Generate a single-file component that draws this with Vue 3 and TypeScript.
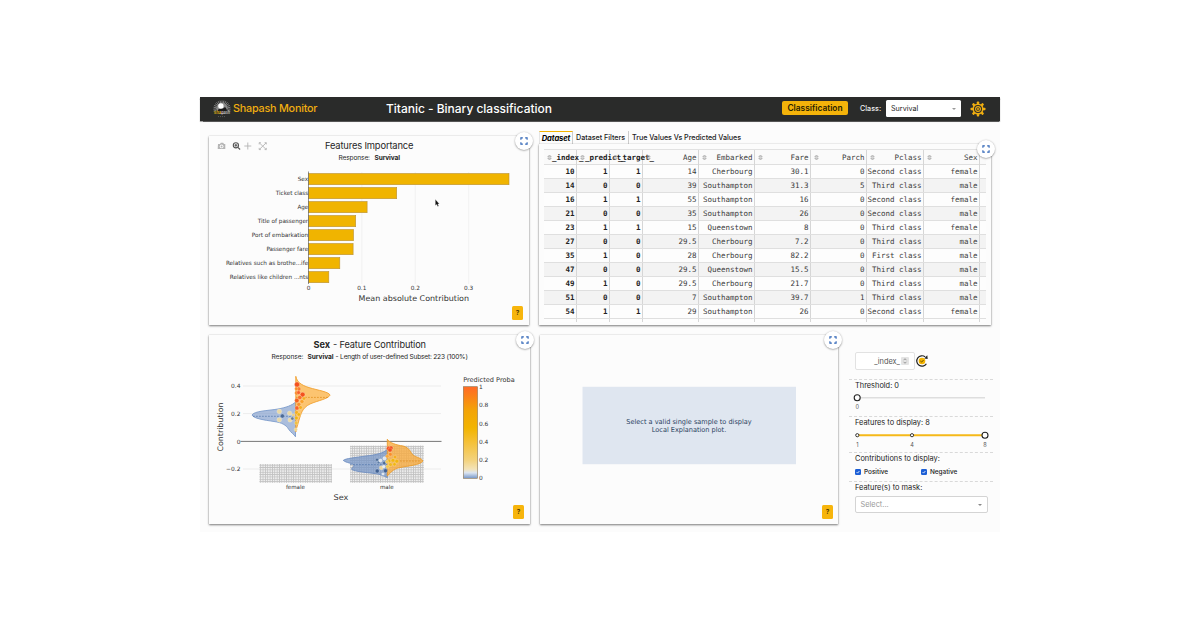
<script setup lang="ts">
interface Bar { label: string; w: number; lw: number }
const bars: Bar[] = [
  { label: 'Sex', w: 200.4, lw: 10.5 },
  { label: 'Ticket class', w: 88.1, lw: 32.5 },
  { label: 'Age', w: 58.5, lw: 10.8 },
  { label: 'Title of passenger', w: 47.1, lw: 50.5 },
  { label: 'Port of embarkation', w: 44.9, lw: 56.5 },
  { label: 'Passenger fare', w: 44.5, lw: 41.8 },
  { label: 'Relatives such as brothe...ife', w: 31.2, lw: 82.3 },
  { label: 'Relatives like children ...nts', w: 20.2, lw: 78.4 },
]
const xTicks = [
  { x: 308.5, t: '0' },
  { x: 361.8, t: '0.1' },
  { x: 415.3, t: '0.2' },
  { x: 468.7, t: '0.3' },
]
const yTicks = [
  { y: 386, t: '0.4' },
  { y: 413.6, t: '0.2' },
  { y: 441.4, t: '0' },
  { y: 469, t: '−0.2' },
]
const scaleTicks = ['1', '0.8', '0.6', '0.4', '0.2', '0']
const columns = ['_index_', '_predict_', '_target_', 'Age', 'Embarked', 'Fare', 'Parch', 'Pclass', 'Sex']
const rows: string[][] = [
  ['10', '1', '1', '14', 'Cherbourg', '30.1', '0', 'Second class', 'female'],
  ['14', '0', '0', '39', 'Southampton', '31.3', '5', 'Third class', 'male'],
  ['16', '1', '1', '55', 'Southampton', '16', '0', 'Second class', 'female'],
  ['21', '0', '0', '35', 'Southampton', '26', '0', 'Second class', 'male'],
  ['23', '1', '1', '15', 'Queenstown', '8', '0', 'Third class', 'female'],
  ['27', '0', '0', '29.5', 'Cherbourg', '7.2', '0', 'Third class', 'male'],
  ['35', '1', '0', '28', 'Cherbourg', '82.2', '0', 'First class', 'male'],
  ['47', '0', '0', '29.5', 'Queenstown', '15.5', '0', 'Third class', 'male'],
  ['49', '1', '0', '29.5', 'Cherbourg', '21.7', '0', 'Third class', 'male'],
  ['51', '0', '0', '7', 'Southampton', '39.7', '1', 'Third class', 'male'],
  ['54', '1', '1', '29', 'Southampton', '26', '0', 'Second class', 'female'],
]
type Dot = [number, number, number, string]
const dots: Dot[] = [
  [279.3, 411.5, 2.4, '#e9d9a8'], [279.3, 419.8, 2.4, '#e9d9a8'], [282.4, 416, 2, '#4a6a96'],
  [289.6, 413.2, 2.3, '#e9d9a8'], [290, 420, 2.2, '#e9d9a8'], [292.3, 418.5, 1.5, '#6b7c8d'], [293.4, 415, 1.6, '#e9cf88'],
  [297, 384.5, 2.5, '#f4511e'], [298.8, 389, 2, '#f9782a'], [296.6, 393, 2, '#f98c2a'], [302.6, 394.6, 2.4, '#f4511e'],
  [299.8, 397.5, 2.1, '#f9702a'], [296.8, 400.5, 2.2, '#f4611e'], [302, 401.5, 2, '#f9a02a'], [298.8, 404.5, 2, '#f9902a'],
  [297, 408, 2.1, '#f9602a'], [300.5, 407.5, 1.8, '#f5ae20'], [296.6, 412.5, 1.9, '#f5ae20'], [298.8, 414.5, 1.7, '#f2b510'],
  [296.4, 418, 1.8, '#f2b510'], [296.3, 423, 1.8, '#efc040'], [295.8, 429.5, 1.7, '#f0d68c'], [296.3, 388.8, 1.7, '#f9902a'],
  [298.6, 392.6, 1.8, '#f9602a'], [304, 398.5, 1.7, '#f5ae20'],
  [377, 459.7, 1.5, '#4a6a96'], [378.6, 462.5, 1.3, '#5b7ba6'], [384.3, 463, 1.7, '#4a6a96'], [384.5, 458.4, 1.8, '#dfe5ea'],
  [381.3, 467.8, 2.1, '#ecd79c'], [377.2, 471, 2, '#3f6092'], [385.5, 470.8, 2, '#3f6092'], [383.8, 466.5, 1.5, '#e8edf0'],
  [380.5, 460.5, 1.7, '#dfe5ea'], [383, 474, 1.3, '#dbe3ea'],
  [388.6, 448.4, 2.1, '#f4511e'], [391, 448, 2, '#f4511e'], [390, 450, 2.1, '#f4511e'], [390.3, 454.3, 1.9, '#f9902a'], [387.3, 456.3, 1.8, '#f9a83a'], [395, 457, 1.8, '#f5ae20'],
  [389, 461, 1.9, '#f2b510'], [393, 460.3, 1.9, '#f2b510'], [396.8, 461.2, 1.9, '#f2b510'], [390.5, 464.6, 1.9, '#f0b820'],
  [387.5, 466.6, 1.8, '#f0c850'], [394.5, 464.3, 1.7, '#f2b510'], [387, 461.8, 1.7, '#f0c850'],
]
const rays = Array.from({ length: 17 }, (_, i) => i * 13 - 104)
const teeth = Array.from({ length: 8 }, (_, i) => i * 45)
</script>

<template>
  <div class="page">
    <div class="app">
      <header class="bar">
        <svg class="logo" width="20" height="20" viewBox="0 0 20 20">
          <g stroke="#8f8f8f" stroke-width=".8">
            <line v-for="a in rays" :key="a" x1="10" y1="4" x2="10" y2="1.4" :transform="`rotate(${a} 10 10)`" />
          </g>
          <circle cx="10" cy="9.3" r="5.8" fill="#8a8a8a" />
          <path d="M5 12 Q7 8.5 11 9.5 L13 8 Q15.5 10 15 14 L5 14 Z" fill="#1c1c1c" />
          <circle cx="8.9" cy="7" r="2.7" fill="#fff" />
          <text x="1.7" y="14.5" font-size="5" font-weight="bold" textLength="7.8" lengthAdjust="spacingAndGlyphs" fill="#d6a416">sha</text>
          <text x="9.5" y="14.5" font-size="5" font-weight="bold" textLength="8.6" lengthAdjust="spacingAndGlyphs" fill="#b9b9b9">pash</text>
          <path d="M6 17.6h8" stroke="#666" stroke-width=".8" stroke-dasharray="1 1" />
        </svg>
        <span class="brand">Shapash Monitor</span>
        <span class="title">Titanic - Binary classification</span>
        <span class="pill">Classification</span>
        <span class="cls">Class:</span>
        <span class="select">Survival<i class="caret"></i></span>
        <svg class="gear" width="16" height="16" viewBox="-8 -8 16 16">
          <rect v-for="a in teeth" :key="a" x="-1.2" y="-7.5" width="2.4" height="2.6" rx=".7" fill="#f0ae10" :transform="`rotate(${a})`" />
          <circle r="4.8" fill="none" stroke="#f0ae10" stroke-width="1.6" />
          <circle r="2.4" fill="none" stroke="#f0ae10" stroke-width="1.1" />
          <circle r="1" fill="#f0ae10" />
        </svg>
      </header>

      <section class="row first">
        <article class="card importance">
          <svg width="320" height="189" viewBox="209 136 320 189">
            <g fill="#b5b5b5">
              <path d="M218 144h2l.8-1.2h2.4l.8 1.2h1.3v5h-7.6z" />
              <circle cx="221.6" cy="146.4" r="1.9" fill="#fcfcfc" /><circle cx="221.6" cy="146.4" r="1" />
            </g>
            <g fill="none" stroke="#555" stroke-width="1.1">
              <circle cx="235.9" cy="145.3" r="2.6" /><path d="M237.9 147.3l2.2 2.2M234.5 145.3h2.8M235.9 143.9v2.8" />
            </g>
            <g fill="none" stroke="#b4b4b4" stroke-width=".9">
              <path d="M244.3 146h7M247.8 142.5v7M259.3 142.8l6.9 6.7M266.2 142.8l-6.9 6.7" />
              <path d="M259.2 144.4v-1.7h1.7M264.6 142.7h1.7v1.7M266.3 147.9v1.7h-1.7M260.9 149.6h-1.7v-1.7" />
            </g>
            <text class="ui" x="369.2" y="149.2" text-anchor="middle" font-size="9.4" textLength="88.6">Features Importance</text>
            <text class="ui" x="338.5" y="159.5" font-size="6.6" textLength="31.5">Response:</text>
            <text class="ui" x="374.5" y="159.5" font-size="6.6" font-weight="bold" textLength="25.5">Survival</text>
            <path d="M361.8 172v112M415.3 172v112M468.7 172v112" stroke="#efefef" stroke-width=".8" />
            <g v-for="(b, i) in bars" :key="b.label">
              <rect x="308.6" :y="173.5 + i * 14" :width="b.w" height="11.2" fill="#f0b400" stroke="#b99137" stroke-width=".6" />
              <text class="plot" x="308.2" :y="181.1 + i * 14" text-anchor="end" font-size="5.8" :textLength="b.lw" lengthAdjust="spacingAndGlyphs">{{ b.label }}</text>
            </g>
            <path d="M308.5 171.5v112.5" stroke="#666" stroke-width=".7" />
            <text v-for="t in xTicks" :key="t.t" class="plot" :x="t.x" y="290.4" text-anchor="middle" font-size="5.8">{{ t.t }}</text>
            <text class="plot" x="413.8" y="300.5" text-anchor="middle" font-size="7.8" textLength="110.5" lengthAdjust="spacingAndGlyphs">Mean absolute Contribution</text>
            <path d="M435.3 199.3v6.3l1.4-1.2 1 2.2 1.1-.5-1-2.1h1.6z" fill="#111" stroke="#fff" stroke-width=".3" />
          </svg>
          <span class="expand"><svg width="8" height="8" viewBox="0 0 8 8"><path d="M.9 2.8V.9h1.9M5.2.9h1.9v1.9M7.1 5.2v1.9H5.2M2.8 7.1H.9V5.2" /></svg></span>
          <span class="help">?</span>
        </article>

        <div class="dataset">
          <nav class="tabs">
            <span class="tab active">Dataset</span>
            <span class="tab filters">Dataset Filters</span>
            <span class="tab values">True Values Vs Predicted Values</span>
          </nav>
          <article class="card sheet">
            <div class="table">
              <div class="tr head">
                <div v-for="(c, i) in columns" :key="c" class="th" :class="{ key: i < 3 }">
                  <svg width="5" height="7" viewBox="0 0 5 7"><path d="M.8 2.8 2.5 1 4.2 2.8zM.8 4.2 2.5 6 4.2 4.2z" fill="none" stroke="#999" stroke-width=".7" /></svg>
                  <span>{{ c }}</span>
                </div>
                <div class="rest"></div>
              </div>
              <div v-for="(r, i) in rows" :key="r[0]" class="tr" :class="{ odd: i % 2 === 1 }">
                <div v-for="(c, j) in r" :key="j" class="td" :class="{ key: j < 3 }">{{ c }}</div>
                <div class="rest"></div>
              </div>
              <div class="tr tail">
                <div v-for="c in columns" :key="c" class="td"></div>
                <div class="rest"></div>
              </div>
            </div>
            <span class="expand"><svg width="8" height="8" viewBox="0 0 8 8"><path d="M.9 2.8V.9h1.9M5.2.9h1.9v1.9M7.1 5.2v1.9H5.2M2.8 7.1H.9V5.2" /></svg></span>
          </article>
        </div>
      </section>

      <section class="row second">
        <article class="card contribution">
          <svg width="321" height="189" viewBox="209 335 321 189">
            <defs>
              <pattern id="hatch" x="259.5" y="464" width="2.35" height="2.35" patternUnits="userSpaceOnUse">
                <rect width="2.35" height="2.35" fill="#efefef" />
                <path d="M0 1.17h2.35M1.17 0v2.35" stroke="#c2c2c2" stroke-width=".8" />
              </pattern>
              <linearGradient id="proba" x1="0" y1="0" x2="0" y2="1">
                <stop offset="0" stop-color="#ff6a26" /><stop offset=".1" stop-color="#fb8019" />
                <stop offset=".26" stop-color="#f3a407" /><stop offset=".45" stop-color="#f2b400" />
                <stop offset=".6" stop-color="#f5c035" /><stop offset=".8" stop-color="#f3d27c" />
                <stop offset=".9" stop-color="#f3e3b8" /><stop offset=".94" stop-color="#dbe4f0" />
                <stop offset="1" stop-color="#7797c8" />
              </linearGradient>
            </defs>
            <text class="ui" x="313.4" y="347.9" font-size="9.2" font-weight="bold" textLength="16.6">Sex</text>
            <text class="ui" x="333" y="347.9" font-size="9.2" textLength="93">- Feature Contribution</text>
            <text class="ui" x="271.5" y="358.5" font-size="6.6" textLength="31.8">Response:</text>
            <text class="ui" x="307.5" y="358.5" font-size="6.6" font-weight="bold" textLength="26">Survival</text>
            <text class="ui" x="335.6" y="358.5" font-size="6.6" textLength="132.2">- Length of user-defined Subset: 223 (100%)</text>
            <path d="M243 386h198M243 413.6h198M243 469h198" stroke="#e9e9e9" stroke-width=".8" />
            <rect x="259.4" y="464" width="72.6" height="18.8" fill="url(#hatch)" />
            <rect x="350" y="445.6" width="73.8" height="37.2" fill="url(#hatch)" />
            <path d="M240.5 441.4h201" stroke="#555" stroke-width=".8" />
            <g stroke-width=".9" stroke-linejoin="round">
              <path d="M295.5 402C292 405.5 286 407.5 278 409C268 410.7 254 411 252 415C253.5 418.5 264 420 274 421.5C282 422.6 286 425 288.5 429C291 433 294 434 295.5 436.8Z" fill="#7f9dcb" fill-opacity=".66" stroke="#7d9ccb" />
              <path d="M295.8 376.3C297 382 301 385 309 387.6C318 390.3 329.5 392 330 395.2C328 399 318 400.5 310 404C302 408 301 414 299 420C298 425 296.5 427 295.8 432Z" fill="#fbb243" fill-opacity=".76" stroke="#f0a232" />
              <path d="M387.3 449.3C384 453 376 455 366 456C356 457.5 345 458.5 343.3 460.4C346 463 353 463 354 465.5C353 468 350.5 468.5 352 469.7C360 473 376 472.6 381 475C384 476 385 476.6 387.3 477.6Z" fill="#7594c6" fill-opacity=".72" stroke="#7090c2" />
              <path d="M387.3 439.3C390 443 396 445 403 446C410 448 410 452 413 455C416 457.5 422 458 422.8 461.2C420 465 408 466 400 467.5C393 469 390 473 387.3 476.2Z" fill="#f9aa3c" fill-opacity=".78" stroke="#eb9d2e" />
            </g>
            <g stroke-width=".7" stroke-dasharray="1.8 1.2" fill="none">
              <path d="M253 416.3H295M350 464.6H387" stroke="#5478ae" />
              <path d="M296 397.4H328M388 461H421" stroke="#e08b17" />
            </g>
            <circle v-for="(d, i) in dots" :key="i" :cx="d[0]" :cy="d[1]" :r="d[2]" :fill="d[3]" stroke="#fff" stroke-opacity=".5" stroke-width=".4" />
            <text v-for="t in yTicks" :key="t.t" class="plot" x="240.4" :y="t.y + 2.1" text-anchor="end" font-size="5.9">{{ t.t }}</text>
            <text class="plot" x="295.4" y="488.9" text-anchor="middle" font-size="5.6" textLength="19" lengthAdjust="spacingAndGlyphs">female</text>
            <text class="plot" x="386.8" y="488.9" text-anchor="middle" font-size="5.6" textLength="13.8" lengthAdjust="spacingAndGlyphs">male</text>
            <text class="plot" x="341" y="499.5" text-anchor="middle" font-size="7.8" textLength="14.8" lengthAdjust="spacingAndGlyphs">Sex</text>
            <text class="plot" transform="translate(223 427) rotate(-90)" text-anchor="middle" font-size="7.6" textLength="49" lengthAdjust="spacingAndGlyphs">Contribution</text>
            <text class="plot" x="463.2" y="382" font-size="6.5" textLength="51.5" lengthAdjust="spacingAndGlyphs">Predicted Proba</text>
            <rect x="463.3" y="386.7" width="14.2" height="91.6" fill="url(#proba)" stroke="#8a7650" stroke-width=".6" />
            <text v-for="(t, i) in scaleTicks" :key="t" class="plot" x="478.9" :y="389.1 + i * 18.26" font-size="5.9">{{ t }}</text>
          </svg>
          <span class="expand"><svg width="8" height="8" viewBox="0 0 8 8"><path d="M.9 2.8V.9h1.9M5.2.9h1.9v1.9M7.1 5.2v1.9H5.2M2.8 7.1H.9V5.2" /></svg></span>
          <span class="help">?</span>
        </article>

        <article class="card local">
          <svg width="298" height="189" viewBox="540 335 298 189">
            <rect x="582.5" y="386.8" width="213.5" height="77.4" fill="#dfe6f0" />
            <g>
              <text class="note" x="689" y="424" text-anchor="middle" font-size="6.8" textLength="125.3" lengthAdjust="spacingAndGlyphs">Select a valid single sample to display</text>
              <text class="note" x="689" y="432.4" text-anchor="middle" font-size="6.8" textLength="74.5" lengthAdjust="spacingAndGlyphs">Local Explanation plot.</text>
            </g>
          </svg>
          <span class="expand"><svg width="8" height="8" viewBox="0 0 8 8"><path d="M.9 2.8V.9h1.9M5.2.9h1.9v1.9M7.1 5.2v1.9H5.2M2.8 7.1H.9V5.2" /></svg></span>
          <span class="help">?</span>
        </article>

        <aside class="panel">
          <div class="picker">
            <span class="index">_index_<svg width="8" height="8" viewBox="0 0 8 8"><rect width="8" height="8" rx="1" fill="#e4e4e4" /><path d="M2.6 3.2 4 1.7 5.4 3.2M2.6 4.8 4 6.3 5.4 4.8" fill="none" stroke="#777" stroke-width=".7" /></svg></span>
            <svg width="14" height="14" viewBox="0 0 14 14">
              <path d="M11.4 9.7A5.2 5.2 0 1 1 10.2 2.9" fill="none" stroke="#222" stroke-width="1.2" />
              <path d="M9.2 4.6 12.7 4.9 12.3 1.2z" fill="#222" />
              <circle cx="7" cy="7" r="3.3" fill="#f4b400" /><path d="M5.4 7l1.2 1.1 2-2.1" fill="none" stroke="#5a4300" stroke-width=".9" />
            </svg>
          </div>
          <div class="block threshold">
            <label>Threshold: 0</label>
            <svg width="143" height="20" viewBox="849 391 143 20">
              <path d="M857 397.8h128" stroke="#dedede" stroke-width="1.6" />
              <circle cx="857.2" cy="397.8" r="3" fill="#fff" stroke="#222" stroke-width="1.1" />
              <text class="tick" x="857.2" y="409.3" text-anchor="middle">0</text>
            </svg>
          </div>
          <div class="block features">
            <label>Features to display: 8</label>
            <svg width="143" height="20" viewBox="849 428 143 20">
              <path d="M857 435.2h128" stroke="#f5b91a" stroke-width="2" />
              <circle cx="857.3" cy="435.2" r="1.6" fill="#fff" stroke="#222" stroke-width=".9" />
              <circle cx="912" cy="435.2" r="1.6" fill="#fff" stroke="#222" stroke-width=".9" />
              <circle cx="985" cy="435.2" r="3" fill="#fff" stroke="#222" stroke-width="1.1" />
              <text class="tick" x="857.3" y="446.8" text-anchor="middle">1</text>
              <text class="tick" x="912" y="446.8" text-anchor="middle">4</text>
              <text class="tick" x="985" y="446.8" text-anchor="middle">8</text>
            </svg>
          </div>
          <div class="block signs">
            <label>Contributions to display:</label>
            <div class="checks">
              <span v-for="n in ['Positive', 'Negative']" :key="n" class="check">
                <svg width="6" height="6" viewBox="0 0 6 6"><rect width="6" height="6" rx="1.2" fill="#1c5fd6" /><path d="M1.6 3.1l1 1 1.8-2.1" fill="none" stroke="#fff" stroke-width=".8" /></svg>{{ n }}
              </span>
            </div>
          </div>
          <div class="block mask">
            <label>Feature(s) to mask:</label>
            <div class="drop">Select...<i></i></div>
          </div>
        </aside>
      </section>
    </div>
  </div>
</template>

<style>
html, body { margin: 0; background: #fff; }
</style>

<style scoped>
.page { width: 1200px; height: 630px; padding: 97px 200px 0; box-sizing: border-box; background: #fff; overflow: hidden; font-family: "Inter", "Liberation Sans", sans-serif; color: #222; }
.app { width: 800px; height: 435px; background: #fcfcfc; }
.bar { display: flex; align-items: center; height: 24px; background: #2a2b2a; padding: 0 14px 0 12px; white-space: nowrap; box-shadow: 0 .5px 1px #555; }
.logo { margin-right: 1px; flex: none; font-family: "Liberation Sans", sans-serif; }
.brand { width: 153px; color: #f0ae10; font-size: 10.8px; letter-spacing: -.22px; line-height: 14px; margin-top: -1px; font-weight: 500; }
.title { width: 396px; color: #fff; font-size: 12px; font-weight: 500; letter-spacing: -.02px; margin-top: -1px; }
.pill { width: 66px; height: 14px; line-height: 14.6px; margin-top: -2px; text-align: center; border-radius: 2px; background: #f4b30a; font-size: 8.4px; font-weight: 600; color: #2a2200; }
.cls { width: 26px; margin: -1px 0 0 12px; color: #eee; font-size: 7.2px; font-weight: 500; }
.select { display: flex; align-items: center; justify-content: space-between; width: 75px; height: 17px; margin-top: -1px; box-sizing: border-box; padding: 0 5px 0 5px; border-radius: 1.5px; background: #fff; font-size: 7.2px; }
.caret { border: 2px solid transparent; border-top: 2.2px solid #999; border-bottom: 0; }
.gear { margin-left: auto; margin-top: -1px; }
.row { display: flex; padding-left: 9px; }
.first { height: 204px; box-sizing: border-box; gap: 10px; }
.second { padding: 10px 0 0 9px; height: 200px; box-sizing: border-box; gap: 10px; }
.card { position: relative; background: #fcfcfc; box-shadow: 0 .5px 2px rgba(0, 0, 0, .5), 0 0 1px rgba(0, 0, 0, .2); }
.card > svg { display: block; }
.importance { width: 320px; height: 189px; margin-top: 15px; }
.contribution { width: 321px; height: 189px; }
.local { width: 298px; height: 189px; }
.expand { position: absolute; top: -4px; right: -4px; width: 18px; height: 18px; border-radius: 50%; background: #fff; box-shadow: 0 .5px 2px rgba(0, 0, 0, .45); display: grid; place-items: center; }
.expand path { fill: none; stroke: #2b62b5; stroke-width: 1.1; }
.help { position: absolute; right: 6px; bottom: 5px; width: 11px; height: 14px; line-height: 14px; text-align: center; border-radius: 1.5px; background: #f7b50c; font-size: 6.6px; font-weight: 600; color: #4a3800; }
.local .help { right: 5px; }
.ui { font-family: "Inter", sans-serif; fill: #262626; }
.plot, .note { font-family: "DejaVu Sans", sans-serif; fill: #333; }
.note { fill: #2a3f5f; }
.dataset { width: 452px; }
.tabs { display: flex; height: 13px; margin-top: 10px; font-size: 7.2px; line-height: 13px; white-space: nowrap; font-weight: 500; }
.tab { box-sizing: border-box; }
.active { width: 34px; text-align: center; border-top: 1.5px solid #f4b400; border-right: 1px solid #ccc; border-left: 1px solid #e5e5e5; font-size: 7.6px; font-weight: 700; font-style: italic; color: #000; letter-spacing: -.1px; }
.filters { width: 56px; padding-left: 3px; border-right: 1px solid #ccc; letter-spacing: -.03px; }
.values { padding-left: 3px; letter-spacing: -.06px; }
.sheet { height: 181px; box-sizing: border-box; padding: 6px 5px 0; }
.table { font: 7.5px/13.2px "DejaVu Sans Mono", monospace; box-shadow: 0 -.6px 0 #d0d0d0; color: #3a3a3a; }
.tr { display: grid; grid-template-columns: 33px 33px 33px 56px 56px 56px 56px 57px 56px 1fr; height: 14.06px; box-sizing: border-box; border-bottom: 1px solid #dfdfdf; background: #fdfdfd; }
.head { background: #fafafa; height: 14.5px; line-height: 15px; }
.odd { background: #f3f3f3; }
.tail { height: 3px; border: 0; }
.td, .th { border-right: 1px solid #d6d6d6; box-sizing: border-box; padding-right: 1.4px; white-space: nowrap; }
.td { display: flex; justify-content: flex-end; }
.th { display: flex; justify-content: space-between; padding-left: 3px; }
.th svg { flex: none; margin-top: 3.6px; }
.key { font-weight: bold; color: #222; }
.rest { min-width: 0; }
.panel { width: 144px; margin-left: 1px; font-size: 7.4px; box-sizing: border-box; }
.picker { display: flex; align-items: center; gap: 0; height: 44px; padding: 8px 0 0 6px; box-sizing: border-box; }
.index { display: flex; align-items: center; justify-content: flex-end; gap: 1px; width: 60px; height: 18px; box-sizing: border-box; padding-right: 5px; border: 1px solid #e2e2e2; border-radius: 2px; background: #fff; color: #555; }
.block { border-top: 1px dashed #d9d9d9; box-sizing: border-box; }
.block label { display: block; height: 11px; line-height: 11px; padding-left: 6px; font-size: 7.4px; white-space: nowrap; }
.block svg { display: block; }
.threshold { height: 37px; }
.features { height: 36px; }
.signs { height: 29px; }
.tick { font-size: 5.6px; fill: #555; }
.checks { display: flex; padding: 5px 0 0 6px; }
.check { display: flex; align-items: center; gap: 3px; width: 66px; height: 6px; font-size: 6.4px; font-weight: 500; }
.drop { display: flex; align-items: center; justify-content: space-between; width: 133px; height: 17px; margin: 3px 0 0 5.5px; padding: 0 5px; box-sizing: border-box; border: 1px solid #d4d4d4; border-radius: 2px; background: #fff; color: #999; }
.drop i { border: 2.3px solid transparent; border-top: 2.5px solid #888; border-bottom: 0; }
</style>
